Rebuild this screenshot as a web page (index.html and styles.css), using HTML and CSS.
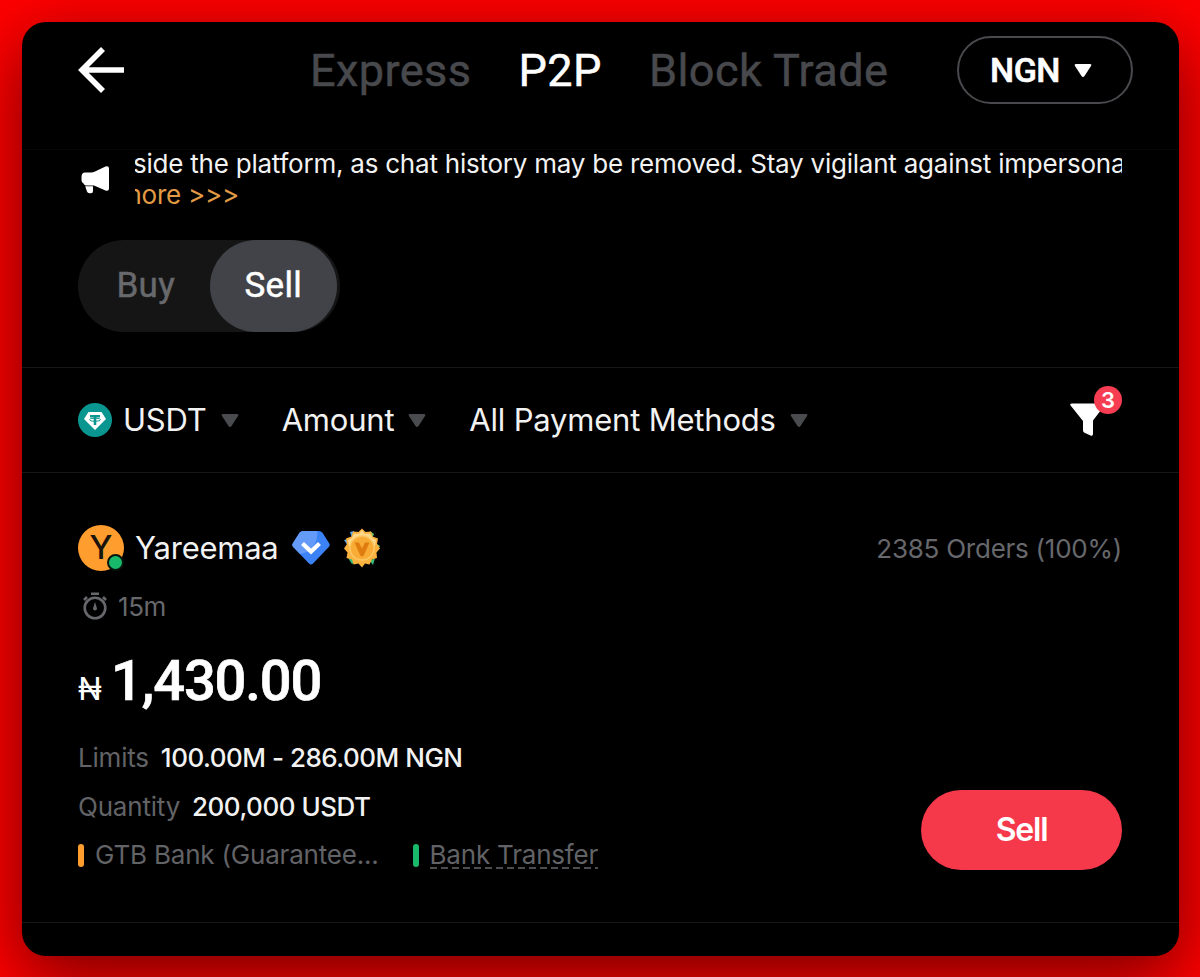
FILE: index.html
```html
<!DOCTYPE html>
<html lang="en">
<head>
    <meta charset="UTF-8">
    <meta name="viewport" content="width=device-width, initial-scale=1.0">
    <title>P2P Trading</title>
    <link rel="stylesheet" href="styles.css">
</head>
<body>
    <div class="screen">
        <header class="top-bar">
            <a class="back" href="#" aria-label="Back">
                <svg width="46" height="46" viewBox="0 0 46 46" fill="none" stroke="#fff" stroke-width="5.6">
                    <path d="M25 2 L4 23 L25 44 M4 23 H46"/>
                </svg>
            </a>
            <nav class="tabs">
                <a class="tab" href="#">Express</a>
                <a class="tab active" href="#">P2P</a>
                <a class="tab" href="#">Block Trade</a>
            </nav>
            <button class="currency">
                <span>NGN</span>
                <svg width="18" height="15" viewBox="0 0 18 15"><path d="M2 1 H16 Q18 1 17 3 L10.5 13 Q9 15 7.5 13 L1 3 Q0 1 2 1Z" fill="#fff"/></svg>
            </button>
        </header>

        <div class="notice">
            <svg class="megaphone" width="30" height="30" viewBox="0 0 30 30" fill="#fff">
                <path d="M4 7.500 H10 Q12 7.500 14 6.500 L24.500 1.500 Q28 0.500 28 3.500 V23.500 Q28 26.500 24.500 25.500 L13 20.600 H5 Q3.500 20.600 2.500 18.500 Q0.500 17.500 0.500 15 V12 Q0.500 7.500 4 7.500Z"/>
                <path d="M4.200 21.300 H12 V26 Q12 28.300 10 28.300 H8.500 Q6.500 28.300 6 26.500Z"/>
            </svg>
            <div class="notice-text">
                <p class="notice-line">side the platform, as chat history may be removed. Stay vigilant against impersonation</p>
                <p class="notice-more">more &gt;&gt;&gt;</p>
            </div>
        </div>

        <div class="side-switch">
            <button class="side">Buy</button>
            <button class="side selected">Sell</button>
        </div>

        <div class="filters">
            <div class="filter">
                <svg class="coin" width="34" height="34" viewBox="0 0 34 34">
                    <circle cx="17" cy="17" r="17" fill="#0a9690"/>
                    <path d="M10.500 9 H23.500 L28 16 L17 27 L6 16Z" fill="#fff"/>
                    <path d="M12 12 H22 V14.400 H18.300 V22 H15.700 V14.400 H12Z" fill="#0a9690"/>
                    <ellipse cx="17" cy="16.700" rx="5.500" ry="1.600" fill="none" stroke="#0a9690"/>
                </svg>
                <span>USDT</span>
                <svg class="caret" width="18" height="14" viewBox="0 0 18 14"><path d="M2 0 H16 Q18 0 17 2 L10.500 12 Q9 14 7.500 12 L1 2 Q0 0 2 0Z" fill="#4a4b4f"/></svg>
            </div>
            <div class="filter">
                <span>Amount</span>
                <svg class="caret" width="18" height="14" viewBox="0 0 18 14"><path d="M2 0 H16 Q18 0 17 2 L10.500 12 Q9 14 7.500 12 L1 2 Q0 0 2 0Z" fill="#4a4b4f"/></svg>
            </div>
            <div class="filter">
                <span>All Payment Methods</span>
                <svg class="caret" width="18" height="14" viewBox="0 0 18 14"><path d="M2 0 H16 Q18 0 17 2 L10.500 12 Q9 14 7.500 12 L1 2 Q0 0 2 0Z" fill="#4a4b4f"/></svg>
            </div>
            <div class="funnel">
                <svg width="38" height="36" viewBox="0 0 38 36"><path d="M2 1.500 H36 L23 18.500 V32 Q23 34.500 20.500 33.500 L14.500 30.800 Q13 30 13 28.500 V19 L0.600 3.500 Q-0.500 1.500 2 1.500Z" fill="#fff"/></svg>
                <span class="funnel-count">3</span>
            </div>
        </div>

        <section class="offer">
            <div class="trader">
                <div class="avatar">Y<span class="online"></span></div>
                <span class="trader-name">Yareemaa</span>
                <svg class="verified" width="38" height="34" viewBox="0 0 38 34">
                    <path d="M11 0 H27 Q29 0 30.500 1.800 L37 12 Q38.500 14.200 36.800 16 L21 32.500 Q19 34.300 17 32.500 L1.200 16 Q-0.500 14.200 1 12 L7.500 1.800 Q9 0 11 0Z" fill="#3b82f6"/>
                    <path d="M11 0 H25 Q27 13 15 21 L8 23 L1.200 16 Q-0.500 14.200 1 12 L7.500 1.800 Q9 0 11 0Z" fill="#659bf8"/>
                    <path d="M10.500 12.500 L19 20.500 L27.500 12.500" fill="none" stroke="#fff" stroke-width="4.200"/>
                </svg>
                <svg class="medal" width="36" height="40" viewBox="0 0 36 40">
                    <path d="M6 4 L10 3 L8 10Z M0 12 L4 11 L4 18Z" fill="#55a6e8"/>
                    <path d="M26 3 L30 6 L28 11Z M33 16 L36 18 L33 23Z" fill="#6cc56b"/>
                    <path d="M4 30 L8 36 L14 33Z M26 33 L29 37 L31 30Z" fill="#35bd79"/>
                    <path d="M18 0.500 L21.500 4 L27 3.500 L28.500 8.500 L34 10.500 L33 16 L36 20.500 L32.500 24.500 L33 30 L28 31.500 L25.500 36.500 L21 35.500 L18 39.500 L14.500 35.500 L9.500 36.500 L8 31.500 L2.500 30 L3.500 24.500 L0 20.500 L3 16 L2 10.500 L7.500 8.500 L9 3.500 L14.500 4Z" fill="#fbb23f"/>
                    <path d="M18 2 L21 6 L26 5.500 L28 10 L32 12 L31 18 L18 20 L5 18 L4 12 L8 10 L10 5.500 L15 6Z" fill="#ffd88c"/>
                    <circle cx="18" cy="20" r="12" fill="#f8ac35" stroke="#fcc765" stroke-width="1.500"/>
                    <path d="M10.500 14.500 H15 L18 20.500 L21 14.500 H25.500 L20 27 Q18 30 16 27Z" fill="#e07d11"/>
                </svg>
                <span class="orders">2385 Orders (100%)</span>
            </div>

            <div class="time-limit">
                <svg width="26" height="28" viewBox="0 0 26 28" fill="none" stroke="#67686c" stroke-width="2.600">
                    <circle cx="13" cy="16" r="10.300"/>
                    <path d="M9 1.700 H17 M2 8 L5 5 M24 8 L21 5"/>
                    <path d="M13 10 L15 16.500 Q15 18.500 13 18.500 Q11 18.500 11 16.500Z" fill="#67686c" stroke="none"/>
                </svg>
                <span>15m</span>
            </div>

            <div class="price">
                <span class="naira">₦</span>
                <span class="amount">1,430.00</span>
            </div>

            <div class="offer-bottom">
                <div class="details">
                    <div class="detail-row"><span class="label">Limits</span><span class="value">100.00M - 286.00M NGN</span></div>
                    <div class="detail-row"><span class="label">Quantity</span><span class="value">200,000 USDT</span></div>
                    <div class="detail-row">
                        <span class="method gtb">GTB Bank (Guarantee...</span>
                        <span class="method transfer"><span class="dashed">Bank Transfer<svg class="dash-line" width="168" height="2"><path d="M0 1 H168" stroke="#4c4d50" stroke-width="2" stroke-dasharray="7 4"/></svg></span></span>
                    </div>
                </div>
                <button class="sell-btn">Sell</button>
            </div>
        </section>
    </div>
</body>
</html>
```

FILE: styles.css
```css
* {
    box-sizing: border-box;
}
body {
    margin: 0;
    padding: 22px 21px 21px 22px;
    height: 977px;
    background-color: #ff0000;
    font-family: Inter, sans-serif;
    color: #f2f2f2;
    overflow: hidden;
}
.screen {
    height: 934px;
    background: #000;
    border-radius: 24px;
    box-shadow: 0 20px 68px rgba(0,0,0,0.55);
    overflow: hidden;
}
a {
    text-decoration: none;
}
button {
    border: none;
    padding: 0;
    background: none;
    font-family: inherit;
}
svg {
    display: block;
    flex: none;
}
.top-bar {
    height: 128px;
    padding: 14px 46px 0 56px;
    display: flex;
    align-items: flex-start;
    border-bottom: 1px solid #070707;
}
.back {
    margin-top: 11px;
}
.tabs {
    display: flex;
    gap: 47px;
    margin-left: 186px;
    margin-top: 5px;
    font-family: Roboto, sans-serif;
    font-size: 45px;
    line-height: 60px;
    letter-spacing: 0.45px;
    -webkit-text-stroke: 0.5px currentColor;
    white-space: nowrap;
}
.tab {
    color: #48494d;
}
.tab.active {
    color: #fff;
}
.currency {
    width: 176px;
    height: 68px;
    margin-left: auto;
    padding-right: 8px;
    border: 2px solid #48494c;
    border-radius: 34px;
    display: flex;
    align-items: center;
    justify-content: center;
    gap: 14px;
    color: #fff;
    font-family: Roboto, sans-serif;
    font-size: 34px;
    font-weight: 500;
    letter-spacing: -0.5px;
    -webkit-text-stroke: 0.6px currentColor;
}
.notice {
    height: 90px;
    padding: 0 57px 0 59px;
    display: flex;
}
.megaphone {
    margin-top: 15px;
}
.notice-text {
    flex: 1;
    min-width: 0;
    margin-left: 24px;
    overflow: hidden;
    white-space: nowrap;
    font-size: 26px;
    line-height: 32px;
    letter-spacing: -0.23px;
}
.notice-line,
.notice-more {
    margin: 0;
}
.notice-line {
    margin-top: -2px;
    margin-left: -2px;
}
.notice-more {
    margin-top: -1px;
    margin-left: -16px;
    color: #e39a45;
}
.side-switch {
    width: 262px;
    height: 92px;
    margin-left: 56px;
    border-radius: 46px;
    background: #151515;
    display: flex;
    padding-left: 4px;
    padding-right: 3px;
}
.side {
    width: 128px;
    height: 92px;
    padding-bottom: 2px;
    border-radius: 46px;
    font-family: Roboto, sans-serif;
    font-size: 35px;
    letter-spacing: 0.3px;
    -webkit-text-stroke: 0.5px currentColor;
    color: #68696c;
}
.side.selected {
    background: #414348;
    color: #fff;
}
.filters {
    height: 106px;
    margin-top: 35px;
    padding: 0 57px 0 56px;
    border-top: 1px solid #171717;
    border-bottom: 1px solid #171717;
    display: flex;
    align-items: center;
    font-size: 31px;
    letter-spacing: -0.2px;
}
.filter {
    display: flex;
    align-items: center;
    margin-right: 43px;
    white-space: nowrap;
}
.filter span {
    margin-top: -2px;
}
.coin {
    margin-right: 11px;
}
.caret {
    margin-left: 14px;
    margin-top: 2px;
}
.funnel {
    position: relative;
    width: 52px;
    margin-left: auto;
}
.funnel-count {
    position: absolute;
    left: 24px;
    top: -16px;
    width: 28px;
    height: 28px;
    border-radius: 50%;
    background: #f63d51;
    color: #fff;
    font-size: 22px;
    line-height: 28px;
    font-weight: 600;
    text-align: center;
}
.offer {
    height: 450px;
    padding: 52px 57px 0 56px;
    border-bottom: 1px solid #171717;
}
.trader {
    height: 46px;
    display: flex;
    align-items: center;
}
.avatar {
    position: relative;
    width: 46px;
    height: 46px;
    border-radius: 50%;
    background: #ff9e2e;
    color: #19140d;
    font-size: 33px;
    line-height: 44px;
    font-weight: 500;
    text-align: center;
}
.online {
    position: absolute;
    right: 0;
    bottom: 0;
    width: 17px;
    height: 17px;
    border: 2px solid #06150e;
    border-radius: 50%;
    background: #19b96b;
}
.trader-name {
    margin-left: 11px;
    margin-top: -2px;
    font-size: 31px;
    letter-spacing: -0.25px;
}
.verified {
    margin-left: 13px;
}
.medal {
    margin-left: 14px;
}
.orders {
    margin-left: auto;
    color: #67686c;
    font-size: 26px;
    letter-spacing: -0.25px;
    white-space: nowrap;
}
.time-limit {
    height: 32px;
    margin-top: 19px;
    padding-left: 4px;
    display: flex;
    align-items: center;
    gap: 10px;
    color: #67686c;
    font-size: 26px;
    letter-spacing: -0.4px;
}
.price {
    height: 66px;
    margin-top: 26px;
    display: flex;
    align-items: baseline;
    line-height: 66px;
    color: #fff;
}
.naira {
    font-size: 31px;
    width: 33px;
}
.amount {
    font-family: Roboto, sans-serif;
    font-size: 56px;
    font-weight: 500;
    letter-spacing: -1.1px;
    -webkit-text-stroke: 0.7px currentColor;
}
.offer-bottom {
    display: flex;
    justify-content: space-between;
    align-items: flex-start;
    margin-top: 20px;
    font-size: 26px;
    letter-spacing: -0.2px;
}
.detail-row {
    height: 48.5px;
    line-height: 48px;
    display: flex;
    white-space: nowrap;
}
.label {
    color: #626366;
    margin-right: 12px;
}
.value {
    font-weight: 450;
    letter-spacing: -0.5px;
}
.method {
    color: #626366;
    display: flex;
    align-items: center;
}
.method::before {
    content: "";
    width: 6px;
    height: 23px;
    border-radius: 3px;
    background: #19b96b;
    margin-right: 11px;
}
.gtb::before {
    background: #ff9e2e;
}
.transfer {
    margin-left: 34px;
}
.dashed {
    position: relative;
}
.dash-line {
    position: absolute;
    left: 0;
    bottom: 10px;
}
.sell-btn {
    width: 201px;
    height: 80px;
    margin-top: 56px;
    padding-bottom: 1px;
    border-radius: 40px;
    background: #f6384b;
    color: #fff;
    font-size: 32px;
    font-weight: 600;
    letter-spacing: -1.2px;
}
```
